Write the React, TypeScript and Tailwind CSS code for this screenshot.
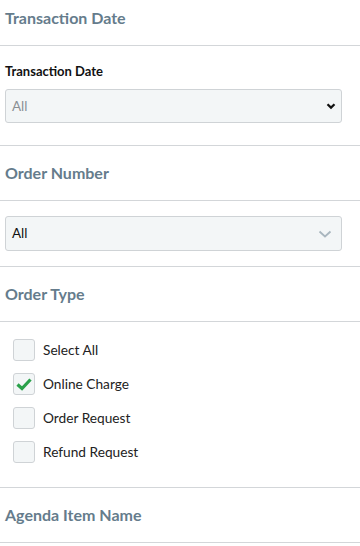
import React from 'react';

const options = [
    { label: 'Select All', checked: false },
    { label: 'Online Charge', checked: true },
    { label: 'Order Request', checked: false },
    { label: 'Refund Request', checked: false },
];

const SectionTitle = ({ children, className = '' }: { children: React.ReactNode; className?: string }) => (
    <div className={`border-b border-[#d3d6d9] px-[5px] ${className}`}>
        <h3 className="text-[16px] leading-[20px] font-bold text-[#657c8c]">{children}</h3>
    </div>
);

const App = () => {
    return (
        <div className="w-[360px] h-[546px] overflow-hidden bg-white" style={{ fontFamily: 'Lato, "Open Sans", sans-serif' }}>
            <SectionTitle className="h-[46px] pt-[8px]">Transaction Date</SectionTitle>

            {/* transaction date select */}
            <div className="border-b border-[#d3d6d9] px-[5px] pt-[15px] pb-[22px]">
                <label className="block text-[13px] font-bold text-[#111] leading-[20px] mb-[8px]">Transaction Date</label>
                <div className="flex items-center justify-between h-[34px] w-[337px] rounded-[3px] border border-[#cfd3d6] bg-[#f3f6f7] pl-[6px] pr-[3px]">
                    <span className="text-[13.5px] text-[#8a8f94]">All</span>
                    <svg width="12" height="12" viewBox="0 0 12 12" className="mr-[1px]">
                        <path d="M2.5 4.2 L6 7.6 L9.5 4.2" fill="none" stroke="#111" strokeWidth="2.2" />
                    </svg>
                </div>
            </div>

            <SectionTitle className="h-[55px] pt-[17px]">Order Number</SectionTitle>

            {/* order number select */}
            <div className="border-b border-[#d3d6d9] px-[5px] py-[15px]">
                <div className="flex items-center justify-between h-[35px] w-[337px] rounded-[3px] border border-[#cfd3d6] bg-[#f3f6f7] pl-[6px] pr-[9px]">
                    <span className="text-[13.5px] text-[#111]">All</span>
                    <svg width="14" height="14" viewBox="0 0 14 14">
                        <path d="M1.5 4.5 L7 9.5 L12.5 4.5" fill="none" stroke="#a9b6bf" strokeWidth="1.8" />
                    </svg>
                </div>
            </div>

            <SectionTitle className="h-[55px] pt-[17px]">Order Type</SectionTitle>

            {/* order type checkboxes */}
            <div className="border-b border-[#d3d6d9] pl-[13px] pt-[17px] pb-[24px] flex flex-col gap-[12px]">
                {options.map((o) => (
                    <div key={o.label} className="flex items-center gap-[8px] h-[22px]">
                        <div className="flex items-center justify-center w-[22px] h-[22px] rounded-[3px] border border-[#cfd3d6] bg-[#f3f6f7]">
                            {o.checked && (
                                <svg width="18" height="18" viewBox="0 0 18 18">
                                    <path d="M2.5 9.5 L7 13.5 L15.5 4.5" fill="none" stroke="#2aa14a" strokeWidth="3.2" />
                                </svg>
                            )}
                        </div>
                        <span className="text-[13.7px] text-[#222]">{o.label}</span>
                    </div>
                ))}
            </div>

            <SectionTitle className="h-[55px] pt-[17px]">Agenda Item Name</SectionTitle>
        </div>
    );
};

export default App;
